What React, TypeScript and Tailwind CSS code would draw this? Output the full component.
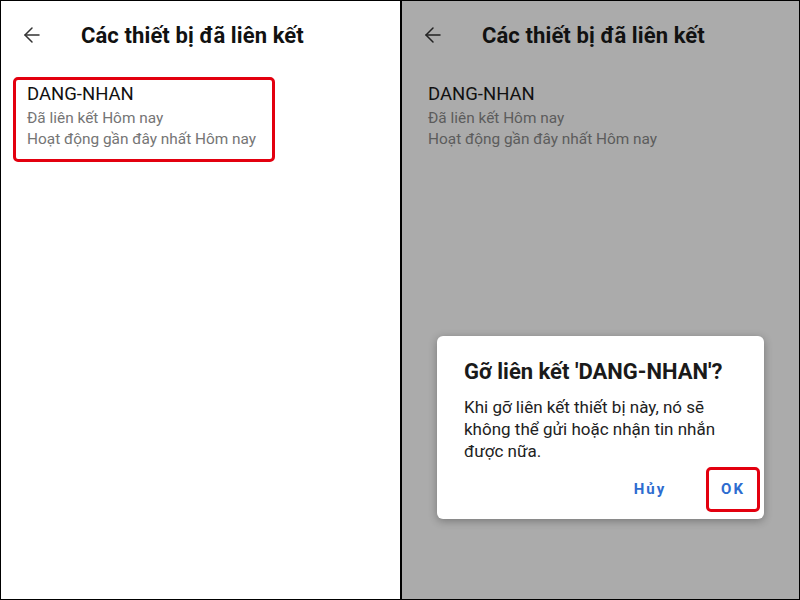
import { ArrowLeft } from "lucide-react";

function Screen({ dim, highlight }: { dim?: boolean; highlight?: boolean }) {
  return (
    <div className="flex flex-col">
      {/* Header */}
      <div className="flex items-center h-[68px] pl-[19px]">
        <ArrowLeft size={24} strokeWidth={1.5} className={dim ? "text-[#222]" : "text-[#333]"} />
        <h1 className="ml-[37px] text-[22px] font-bold tracking-[0.1px] text-[#111]">
          Các thiết bị đã liên kết
        </h1>
      </div>

      {/* Device item */}
      <div className="pl-[12px] pt-[8px]">
        <div
          className={
            "w-[262px] rounded-[5px] border-[3px] px-[11px] pt-[1px] pb-[9px] " +
            (highlight ? "border-[#e3000f]" : "border-transparent")
          }
        >
          <div className="text-[18.5px] leading-[26px] text-[#111]">DANG-NHAN</div>
          <div className={"text-[15.4px] leading-[22px] " + (dim ? "text-[#5c5c5c]" : "text-[#757575]")}>
            Đã liên kết Hôm nay
          </div>
          <div className={"text-[15.4px] leading-[21px] " + (dim ? "text-[#5c5c5c]" : "text-[#757575]")}>
            Hoạt động gần đây nhất Hôm nay
          </div>
        </div>
      </div>
    </div>
  );
}

export default function App() {
  return (
    <div
      className="w-[800px] h-[600px] border border-black flex overflow-hidden"
      style={{ fontFamily: "Roboto, 'Noto Sans', sans-serif" }}
    >
      {/* Left: linked devices list */}
      <div className="w-[399px] h-full bg-white">
        <Screen highlight />
      </div>

      <div className="w-[2px] h-full bg-black" />

      {/* Right: same screen dimmed with confirm dialog */}
      <div className="relative flex-1 h-full bg-[#ababab]">
        <Screen dim />

        <div className="absolute left-[35px] top-[335px] w-[327px] h-[183px] bg-white rounded-[6px] shadow-[0_2px_8px_rgba(0,0,0,0.3)] px-[27px] pt-[22px]">
          <div className="text-[22px] font-bold text-[#1a1a1a] leading-[28px] whitespace-nowrap">
            Gỡ liên kết 'DANG-NHAN'?
          </div>
          <p className="mt-[10px] text-[17px] leading-[22px] text-[#222]">
            Khi gỡ liên kết thiết bị này, nó sẽ không thể gửi hoặc nhận tin nhắn được nữa.
          </p>
          <div className="absolute right-[4px] bottom-[7px] flex items-center">
            <button className="w-[60px] h-[45px] text-[15px] font-bold tracking-[2px] text-[#2d6cd0] mr-[26px]">
              Hủy
            </button>
            <button className="w-[54px] h-[45px] text-[15px] font-bold tracking-[2px] text-[#2d6cd0] border-[3px] border-[#e3000f] rounded-[5px]">
              OK
            </button>
          </div>
        </div>
      </div>
    </div>
  );
}
